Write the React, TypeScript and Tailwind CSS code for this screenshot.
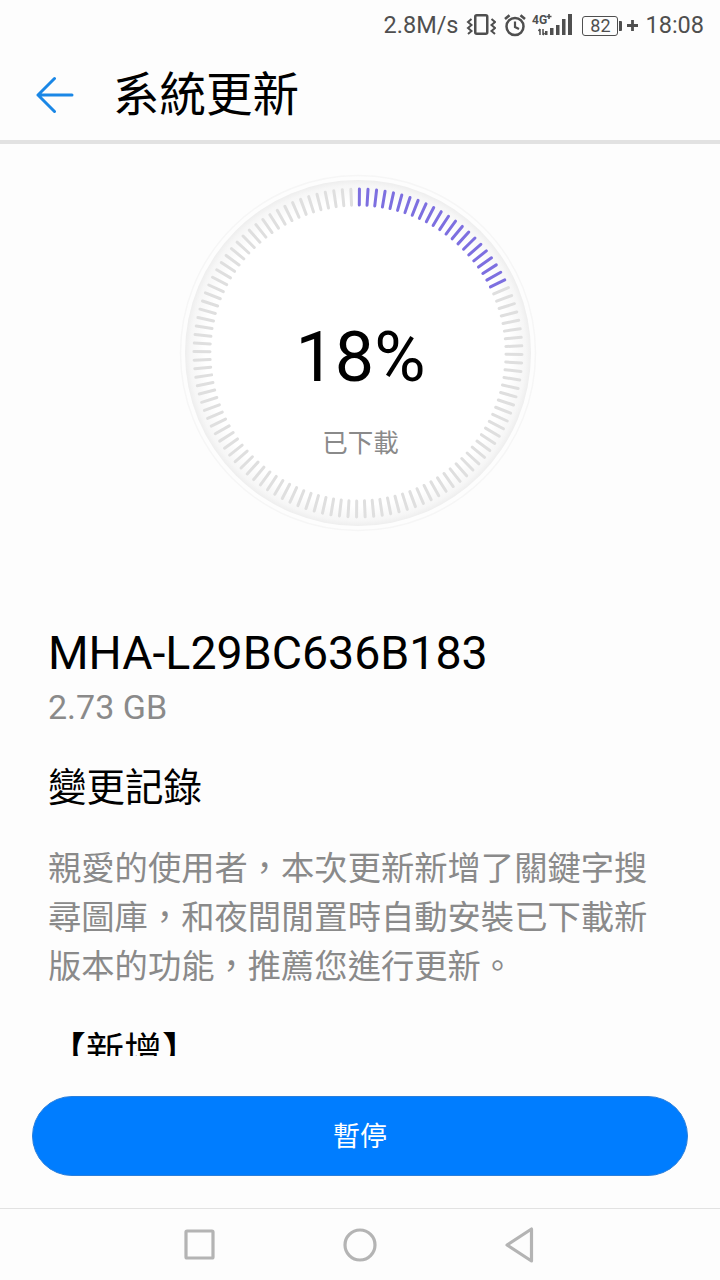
const TICKS = Array.from({ length: 120 }, (_, i) => i);

const Dial = () => {
  return (
    <div className="relative w-[360px] h-[360px]">
      <svg width="360" height="360" viewBox="0 0 360 360" className="block">
        <defs>
          <radialGradient id="band" cx="180" cy="180" r="173" gradientUnits="userSpaceOnUse">
            <stop offset="0.88" stopColor="#ffffff" />
            <stop offset="0.97" stopColor="#f6f6f6" />
            <stop offset="1" stopColor="#eeeeee" />
          </radialGradient>
        </defs>
        <circle cx="180" cy="180" r="177.500" fill="#fdfdfd" stroke="#f6f6f6" strokeWidth="1.500" />
        <circle cx="180" cy="180" r="173" fill="url(#band)" />
        {TICKS.map((i) => (
          <line
            key={i}
            x1="180"
            y1="16"
            x2="180"
            y2="32"
            stroke={i < 22 ? "#7d6fe0" : "#dfdfdf"}
            strokeWidth="3"
            strokeLinecap="round"
            transform={`rotate(${i * 3 + 0.5} 180 180)`}
          />
        ))}
      </svg>
      <div className="absolute inset-0 flex flex-col items-center pl-[5px]">
        <div className="mt-[136px] text-[70px] leading-[96px] text-black font-['Roboto',sans-serif]">18%</div>
        <div className="mt-[20px] text-[25.500px] leading-[36px] text-[#8a8a8a]">已下載</div>
      </div>
    </div>
  );
};

const StatusIcons = () => {
  return (
    <div className="flex items-center">
      <svg width="30" height="26" viewBox="0 0 30 26" fill="none" stroke="#4f4f4f" className="ml-[8px]">
        <rect x="9.250" y="2.250" width="12" height="18.500" rx="1.500" strokeWidth="2.500" />
        <path d="M5.500 6 L2 9 L5.500 12 L2 15 L5.500 18 L2 21" strokeWidth="2" />
        <path d="M25.500 6 L29 9 L25.500 12 L29 15 L25.500 18 L29 21" strokeWidth="2" />
      </svg>
      <svg width="24" height="26" viewBox="0 0 24 26" fill="none" stroke="#4f4f4f" className="ml-[7px]">
        <circle cx="12" cy="13.500" r="8.500" strokeWidth="2.500" />
        <path d="M12 8.500 V14 L16 16" strokeWidth="2.200" />
        <path d="M2 6 L6.500 2.200 M22 6 L17.500 2.200" strokeWidth="2.600" />
      </svg>
      <svg width="42" height="26" viewBox="0 0 42 26" className="ml-[4px]">
        <rect x="37" y="1" width="4" height="21" fill="#4f4f4f" />
        <rect x="31" y="6" width="3.500" height="16" fill="#4f4f4f" />
        <rect x="25" y="12" width="3.500" height="10" fill="#4f4f4f" />
        <rect x="19" y="15" width="3.500" height="7" fill="#4f4f4f" />
        <rect x="14" y="18" width="2.500" height="4" fill="#4f4f4f" />
        <path d="M9 16 V22 M12 16 V22 M9 16 L7.500 18 M12 22 L13.500 20" stroke="#4f4f4f" strokeWidth="1.500" fill="none" />
        <text x="1" y="10.500" fontSize="12" fontWeight="700" fill="#4f4f4f" fontFamily="Roboto, sans-serif">4G</text>
        <path d="M18 1 V6 M15.500 3.500 H20.500" stroke="#4f4f4f" strokeWidth="1.600" />
      </svg>
      <div className="ml-[9px] flex items-center">
        <div className="w-[36px] h-[20px] rounded-[3px] border border-[#4f4f4f] flex items-center justify-center text-[18px] leading-none text-[#4f4f4f]">
          82
        </div>
        <div className="ml-[1px] w-[3px] h-[10px] bg-[#4f4f4f] rounded-r-[1px]" />
      </div>
      <svg width="11" height="11" viewBox="0 0 11 11" className="ml-[5px]" stroke="#4f4f4f" strokeWidth="2.800">
        <path d="M5.500 0 V11 M0 5.500 H11" />
      </svg>
    </div>
  );
};

const App = () => {
  return (
    <div className="w-[720px] h-[1280px] overflow-hidden bg-[#fdfdfd] flex flex-col font-['Roboto','Noto_Sans_CJK_TC',sans-serif]">
      <div className="h-[50px] flex items-center justify-end pr-[16px] pt-[1px] text-[#4f4f4f] text-[23.500px]">
        <span>2.8M/s</span>
        <StatusIcons />
        <span className="ml-[7px]">18:08</span>
      </div>

      <header className="h-[90px] flex items-center shrink-0">
        <svg width="40" height="38" viewBox="0 0 40 38" fill="none" stroke="#1a87e6" strokeWidth="3" strokeLinecap="round" strokeLinejoin="round" className="ml-[36px]">
          <path d="M36 19 H2 M18.500 2.500 L2 19 L18.500 35.500" />
        </svg>
        <h1 className="ml-[37px] text-[46.500px] leading-[60px] text-black font-normal">系統更新</h1>
      </header>
      <div className="h-[4px] bg-[#e2e2e2] shrink-0" />

      <main className="h-[912px] overflow-hidden shrink-0">
        <div className="flex justify-center pt-[29px] pr-[4px]">
          <Dial />
        </div>
        <div className="mt-[90px] px-[48px]">
          <div className="text-[46.500px] leading-[60px] text-black">MHA-L29BC636B183</div>
          <div className="mt-[2px] text-[34px] leading-[44px] text-[#8a8a8a]">2.73 GB</div>
          <div className="mt-[32px] text-[38.500px] leading-[54px] text-black">變更記錄</div>
          <p className="mt-[29px] w-[620px] text-[33.300px] leading-[49px] text-[#8a8a8a]">
            親愛的使用者，本次更新新增了關鍵字搜尋圖庫，和夜間閒置時自動安裝已下載新版本的功能，推薦您進行更新。
          </p>
          <div className="mt-[33px] text-[38px] leading-[54px] text-black">【新增】</div>
        </div>
      </main>

      <div className="px-[32px] pt-[40px] shrink-0">
        <button className="w-full h-[80px] pt-[3px] rounded-full bg-[#007dff] border border-[#2a7fdc] text-white text-[27px] flex items-center justify-center">
          暫停
        </button>
      </div>

      <nav className="mt-[32px] flex-1 border-t border-[#e2e2e2] flex items-center justify-center gap-[116px]">
        <svg width="44" height="44" viewBox="0 0 44 44" fill="none" stroke="#b4b4b4" strokeWidth="3.200" strokeLinejoin="round">
          <rect x="8" y="8" width="27" height="27" rx="1" />
        </svg>
        <svg width="44" height="44" viewBox="0 0 44 44" fill="none" stroke="#b4b4b4" strokeWidth="3.200">
          <circle cx="22" cy="22" r="15" />
        </svg>
        <svg width="44" height="44" viewBox="0 0 44 44" fill="none" stroke="#b4b4b4" strokeWidth="3.200" strokeLinejoin="round">
          <path d="M33.500 6 V38 L9 22 Z" />
        </svg>
      </nav>
    </div>
  );
};

export default App;
